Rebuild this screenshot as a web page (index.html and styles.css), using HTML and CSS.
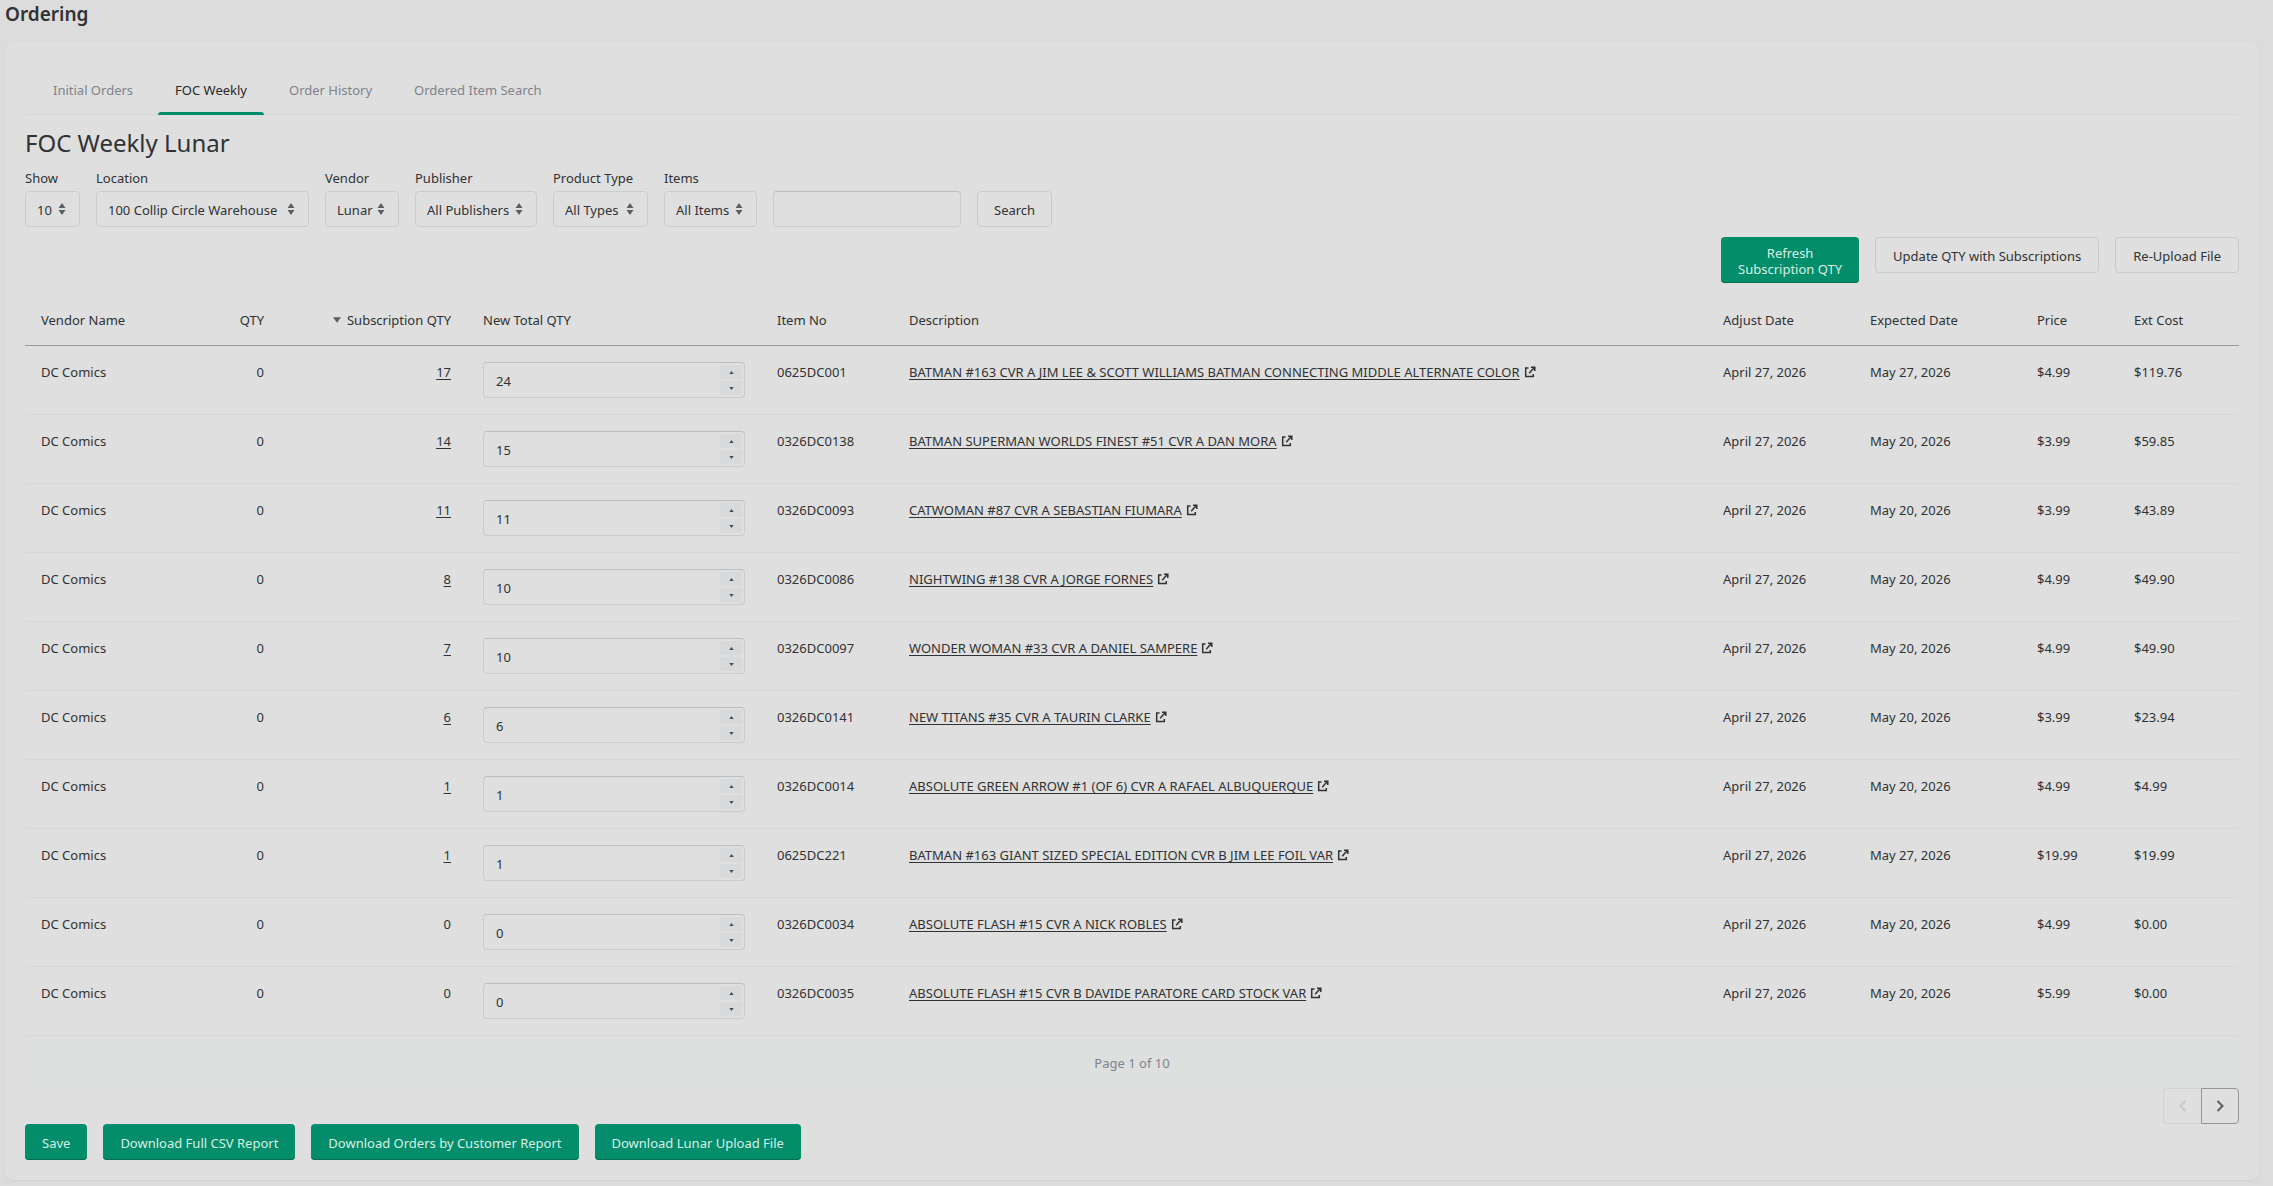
FILE: index.html
```html
<!DOCTYPE html>
<html lang="en">
<head>
<meta charset="utf-8">
<meta name="viewport" content="width=device-width, initial-scale=1">
<title>Ordering</title>
<link rel="stylesheet" href="styles.css">
</head>
<body>
<svg class="sprite" aria-hidden="true">
  <symbol id="external" viewBox="0 0 12 12"><path d="M4.5 2H1.7v8.6h7.6V8M7 1.2h3.8V5M10.4 1.6 8 4 5.2 7.2" fill="none" stroke="currentColor" stroke-width="1.5"/></symbol>
  <symbol id="up" viewBox="0 0 6 4"><path d="M3 0 6 4H0z" fill="currentColor"/></symbol>
  <symbol id="down" viewBox="0 0 6 4"><path d="M3 4 6 0H0z" fill="currentColor"/></symbol>
  <symbol id="updown" viewBox="0 0 8 12"><path d="M4 0 7.5 5H.5zM4 12 7.5 7H.5z" fill="currentColor"/></symbol>
</svg>
<h1 class="page-title">Ordering</h1>
<main class="card">
  <nav class="tabs">
    <a class="tab" href="#initial">Initial Orders</a>
    <a class="tab tab-active" href="#foc" aria-current="page">FOC Weekly</a>
    <a class="tab" href="#history">Order History</a>
    <a class="tab" href="#search">Ordered Item Search</a>
  </nav>
  <h2 class="heading">FOC Weekly Lunar</h2>
  <form class="filters">
    <div class="field show"><label for="show">Show</label><div class="select"><select id="show"><option>10</option></select><svg class="caret"><use href="#updown"/></svg></div></div>
    <div class="field location"><label for="location">Location</label><div class="select"><select id="location"><option>100 Collip Circle Warehouse</option></select><svg class="caret"><use href="#updown"/></svg></div></div>
    <div class="field vendor"><label for="vendor">Vendor</label><div class="select"><select id="vendor"><option>Lunar</option></select><svg class="caret"><use href="#updown"/></svg></div></div>
    <div class="field publisher"><label for="publisher">Publisher</label><div class="select"><select id="publisher"><option>All Publishers</option></select><svg class="caret"><use href="#updown"/></svg></div></div>
    <div class="field type"><label for="type">Product Type</label><div class="select"><select id="type"><option>All Types</option></select><svg class="caret"><use href="#updown"/></svg></div></div>
    <div class="field items"><label for="items">Items</label><div class="select"><select id="items"><option>All Items</option></select><svg class="caret"><use href="#updown"/></svg></div></div>
    <input class="query" type="text" aria-label="Search items">
    <button class="btn" type="button">Search</button>
  </form>
  <div class="actions">
    <button class="btn btn-primary btn-refresh" type="button">Refresh Subscription QTY</button>
    <button class="btn" type="button">Update QTY with Subscriptions</button>
    <button class="btn" type="button">Re-Upload File</button>
  </div>
  <table class="orders">
    <thead>
      <tr><th class="w-vendor">Vendor Name</th><th class="num w-qty">QTY</th><th class="num w-sub"><svg class="sort"><use href="#down"/></svg>Subscription QTY</th><th class="w-total">New Total QTY</th><th class="w-item">Item No</th><th>Description</th><th class="w-adjust">Adjust Date</th><th class="w-expected">Expected Date</th><th class="w-price">Price</th><th class="w-cost">Ext Cost</th></tr>
    </thead>
    <tbody>
      <tr><td>DC Comics</td><td class="num">0</td><td class="num"><a href="#s1">17</a></td><td><div class="stepper"><input type="number" value="24" aria-label="New total QTY"><div class="steps"><button type="button" aria-label="Increase"><svg><use href="#up"/></svg></button><button type="button" aria-label="Decrease"><svg><use href="#down"/></svg></button></div></div></td><td>0625DC001</td><td><a href="#i1">BATMAN #163 CVR A JIM LEE &amp; SCOTT WILLIAMS BATMAN CONNECTING MIDDLE ALTERNATE COLOR</a><svg class="ext"><use href="#external"/></svg></td><td>April 27, 2026</td><td>May 27, 2026</td><td>$4.99</td><td>$119.76</td></tr>
      <tr><td>DC Comics</td><td class="num">0</td><td class="num"><a href="#s2">14</a></td><td><div class="stepper"><input type="number" value="15" aria-label="New total QTY"><div class="steps"><button type="button" aria-label="Increase"><svg><use href="#up"/></svg></button><button type="button" aria-label="Decrease"><svg><use href="#down"/></svg></button></div></div></td><td>0326DC0138</td><td><a href="#i2">BATMAN SUPERMAN WORLDS FINEST #51 CVR A DAN MORA</a><svg class="ext"><use href="#external"/></svg></td><td>April 27, 2026</td><td>May 20, 2026</td><td>$3.99</td><td>$59.85</td></tr>
      <tr><td>DC Comics</td><td class="num">0</td><td class="num"><a href="#s3">11</a></td><td><div class="stepper"><input type="number" value="11" aria-label="New total QTY"><div class="steps"><button type="button" aria-label="Increase"><svg><use href="#up"/></svg></button><button type="button" aria-label="Decrease"><svg><use href="#down"/></svg></button></div></div></td><td>0326DC0093</td><td><a href="#i3">CATWOMAN #87 CVR A SEBASTIAN FIUMARA</a><svg class="ext"><use href="#external"/></svg></td><td>April 27, 2026</td><td>May 20, 2026</td><td>$3.99</td><td>$43.89</td></tr>
      <tr><td>DC Comics</td><td class="num">0</td><td class="num"><a href="#s4">8</a></td><td><div class="stepper"><input type="number" value="10" aria-label="New total QTY"><div class="steps"><button type="button" aria-label="Increase"><svg><use href="#up"/></svg></button><button type="button" aria-label="Decrease"><svg><use href="#down"/></svg></button></div></div></td><td>0326DC0086</td><td><a href="#i4">NIGHTWING #138 CVR A JORGE FORNES</a><svg class="ext"><use href="#external"/></svg></td><td>April 27, 2026</td><td>May 20, 2026</td><td>$4.99</td><td>$49.90</td></tr>
      <tr><td>DC Comics</td><td class="num">0</td><td class="num"><a href="#s5">7</a></td><td><div class="stepper"><input type="number" value="10" aria-label="New total QTY"><div class="steps"><button type="button" aria-label="Increase"><svg><use href="#up"/></svg></button><button type="button" aria-label="Decrease"><svg><use href="#down"/></svg></button></div></div></td><td>0326DC0097</td><td><a href="#i5">WONDER WOMAN #33 CVR A DANIEL SAMPERE</a><svg class="ext"><use href="#external"/></svg></td><td>April 27, 2026</td><td>May 20, 2026</td><td>$4.99</td><td>$49.90</td></tr>
      <tr><td>DC Comics</td><td class="num">0</td><td class="num"><a href="#s6">6</a></td><td><div class="stepper"><input type="number" value="6" aria-label="New total QTY"><div class="steps"><button type="button" aria-label="Increase"><svg><use href="#up"/></svg></button><button type="button" aria-label="Decrease"><svg><use href="#down"/></svg></button></div></div></td><td>0326DC0141</td><td><a href="#i6">NEW TITANS #35 CVR A TAURIN CLARKE</a><svg class="ext"><use href="#external"/></svg></td><td>April 27, 2026</td><td>May 20, 2026</td><td>$3.99</td><td>$23.94</td></tr>
      <tr><td>DC Comics</td><td class="num">0</td><td class="num"><a href="#s7">1</a></td><td><div class="stepper"><input type="number" value="1" aria-label="New total QTY"><div class="steps"><button type="button" aria-label="Increase"><svg><use href="#up"/></svg></button><button type="button" aria-label="Decrease"><svg><use href="#down"/></svg></button></div></div></td><td>0326DC0014</td><td><a href="#i7">ABSOLUTE GREEN ARROW #1 (OF 6) CVR A RAFAEL ALBUQUERQUE</a><svg class="ext"><use href="#external"/></svg></td><td>April 27, 2026</td><td>May 20, 2026</td><td>$4.99</td><td>$4.99</td></tr>
      <tr><td>DC Comics</td><td class="num">0</td><td class="num"><a href="#s8">1</a></td><td><div class="stepper"><input type="number" value="1" aria-label="New total QTY"><div class="steps"><button type="button" aria-label="Increase"><svg><use href="#up"/></svg></button><button type="button" aria-label="Decrease"><svg><use href="#down"/></svg></button></div></div></td><td>0625DC221</td><td><a href="#i8">BATMAN #163 GIANT SIZED SPECIAL EDITION CVR B JIM LEE FOIL VAR</a><svg class="ext"><use href="#external"/></svg></td><td>April 27, 2026</td><td>May 27, 2026</td><td>$19.99</td><td>$19.99</td></tr>
      <tr><td>DC Comics</td><td class="num">0</td><td class="num">0</td><td><div class="stepper"><input type="number" value="0" aria-label="New total QTY"><div class="steps"><button type="button" aria-label="Increase"><svg><use href="#up"/></svg></button><button type="button" aria-label="Decrease"><svg><use href="#down"/></svg></button></div></div></td><td>0326DC0034</td><td><a href="#i9">ABSOLUTE FLASH #15 CVR A NICK ROBLES</a><svg class="ext"><use href="#external"/></svg></td><td>April 27, 2026</td><td>May 20, 2026</td><td>$4.99</td><td>$0.00</td></tr>
      <tr><td>DC Comics</td><td class="num">0</td><td class="num">0</td><td><div class="stepper"><input type="number" value="0" aria-label="New total QTY"><div class="steps"><button type="button" aria-label="Increase"><svg><use href="#up"/></svg></button><button type="button" aria-label="Decrease"><svg><use href="#down"/></svg></button></div></div></td><td>0326DC0035</td><td><a href="#i10">ABSOLUTE FLASH #15 CVR B DAVIDE PARATORE CARD STOCK VAR</a><svg class="ext"><use href="#external"/></svg></td><td>April 27, 2026</td><td>May 20, 2026</td><td>$5.99</td><td>$0.00</td></tr>
    </tbody>
  </table>
  <p class="page-count">Page 1 of 10</p>
  <div class="pager">
    <button class="page-btn" type="button" aria-label="Previous page" disabled><svg viewBox="0 0 8 12"><path d="M6.5 1 1.5 6l5 5" fill="none" stroke="currentColor" stroke-width="2"/></svg></button>
    <button class="page-btn page-next" type="button" aria-label="Next page"><svg viewBox="0 0 8 12"><path d="m1.5 1 5 5-5 5" fill="none" stroke="currentColor" stroke-width="2"/></svg></button>
  </div>
  <div class="downloads">
    <button class="btn btn-primary" type="button">Save</button>
    <button class="btn btn-primary" type="button">Download Full CSV Report</button>
    <button class="btn btn-primary" type="button">Download Orders by Customer Report</button>
    <button class="btn btn-primary" type="button">Download Lunar Upload File</button>
  </div>
</main>
</body>
</html>
```
FILE: styles.css
```css
*, *::before, *::after { box-sizing: border-box; }

body {
  margin: 0;
  padding: 0 14px 6px 5px;
  background: #dcdcdc;
  color: #303234;
  font: 13px/20px "Segoe UI", "Noto Sans", "Open Sans", sans-serif;
}

button, input, select { font: inherit; color: inherit; }
a { color: inherit; text-underline-offset: 2px; }
.sprite { display: none; }

.page-title {
  margin: 0 0 14px;
  font-size: 19px;
  line-height: 28px;
  font-weight: 600;
}

.card {
  padding: 32px 20px 20px;
  background: #dfdfdf;
  border-radius: 8px;
  box-shadow: 0 0 1px #c8c8c8, 0 1px 2px #d2d2d2;
}

.tabs {
  display: flex;
  gap: 8px;
  padding: 0 11px;
  border-bottom: 1px solid #d6d8d8;
}
.tab {
  padding: 6px 17px 14px;
  color: #7d838b;
  text-decoration: none;
  position: relative;
}
.tab-active { color: #26282a; }
.tab-active::after {
  content: "";
  position: absolute;
  left: 0;
  right: 0;
  bottom: -1px;
  height: 3px;
  background: #038d6a;
  border-radius: 3px 3px 0 0;
}

.heading {
  margin: 12px 0 9px;
  font-size: 24px;
  line-height: 32px;
  font-weight: 400;
}

.filters { display: flex; align-items: flex-end; gap: 16px; }
.field label { display: block; margin-bottom: 3px; }
.select { position: relative; }
.select select {
  width: 100%;
  height: 36px;
  padding: 1px 11px 0;
  appearance: none;
  background: none;
  border: 1px solid #c9cccf;
  border-radius: 4px;
}
.caret {
  position: absolute;
  right: 14px;
  top: 12px;
  width: 8px;
  height: 12px;
  color: #5c5f62;
  pointer-events: none;
}
.show { width: 55px; }
.location { width: 213px; }
.vendor { width: 74px; }
.publisher { width: 122px; }
.type { width: 95px; }
.items { width: 93px; }
.query {
  width: 188px;
  height: 36px;
  padding: 0 12px;
  background: none;
  border: 1px solid #c9cccf;
  border-top-color: #b8bfc5;
  border-radius: 4px;
}

.btn {
  min-height: 36px;
  padding: 1px 16px 0;
  background: none;
  border: 1px solid #c5cace;
  border-radius: 4px;
}
.btn-primary {
  padding: 1px 17px 0;
  color: #d9efe6;
  background: #038d6a;
  border: 0;
  box-shadow: inset 0 -1px 0 #02714f;
}

.actions {
  display: flex;
  justify-content: flex-end;
  align-items: flex-start;
  gap: 16px;
  margin-top: 10px;
}
.actions .btn { padding: 1px 17px 0; }
.actions .btn-refresh { width: 138px; min-height: 46px; padding: 1px 12px 0; line-height: 16px; }

.orders {
  width: 100%;
  margin-top: 10px;
  table-layout: fixed;
  border-collapse: separate;
  border-spacing: 0;
}
th {
  padding: 17px 16px 15px;
  font-weight: 400;
  text-align: left;
  border-bottom: 1px solid #999c9e;
}
td {
  padding: 16px;
  vertical-align: top;
  border-bottom: 1px solid #d5d7d8;
}
th.num, td.num { text-align: right; }
.w-vendor { width: 150px; }
.w-qty { width: 105px; }
.w-sub { width: 187px; }
.w-total { width: 294px; }
.w-item { width: 132px; }
.w-adjust { width: 147px; }
.w-expected { width: 167px; }
.w-price { width: 97px; }
.w-cost { width: 121px; }
.sort { width: 8px; height: 6px; margin-right: 6px; vertical-align: 2px; color: #5c5f62; }
.ext { width: 12px; height: 12px; margin-left: 4px; vertical-align: -1px; }

.stepper {
  display: flex;
  height: 36px;
  padding: 2px;
  border: 1px solid #c9cccf;
  border-top-color: #b8bfc5;
  border-radius: 4px;
}
.stepper input {
  flex: 1;
  min-width: 0;
  padding: 2px 10px 0;
  background: none;
  border: 0;
  appearance: textfield;
}
.stepper input::-webkit-inner-spin-button { appearance: none; }
.steps { display: flex; flex-direction: column; gap: 2px; width: 22px; }
.steps button {
  flex: 1;
  display: flex;
  align-items: center;
  justify-content: center;
  padding: 0;
  background: #d8d9da;
  border: 0;
  border-radius: 2px;
}
.steps svg { width: 5px; height: 3px; color: #4a4d50; }

.page-count {
  margin: 0;
  padding: 17px 0 15px;
  text-align: center;
  color: #7d838b;
  background: #dee0df;
}
.pager { display: flex; justify-content: flex-end; }
.page-btn {
  display: flex;
  align-items: center;
  justify-content: center;
  width: 38px;
  height: 36px;
  padding: 0;
  color: #c6c8cc;
  background: none;
  border: 1px solid #d0d2d4;
  border-right: 0;
  border-radius: 4px 0 0 4px;
}
.page-btn svg { width: 8px; height: 12px; }
.page-next {
  color: #5c5f62;
  border: 1px solid #92979b;
  border-radius: 0 4px 4px 0;
}
.downloads { display: flex; gap: 16px; }
```
